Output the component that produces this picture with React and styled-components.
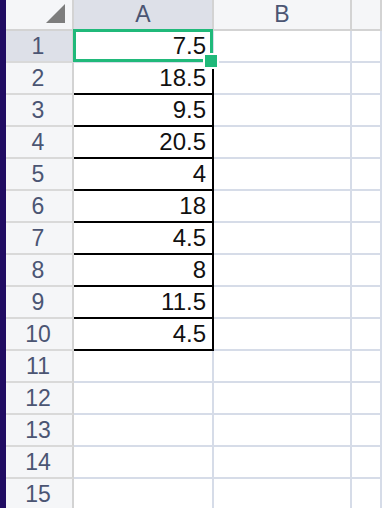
import styled, { createGlobalStyle } from "styled-components";

const GlobalStyle = createGlobalStyle`
  html, body {
    margin: 0;
    padding: 0;
    background: #ffffff;
    overflow: hidden;
  }
  body {
    font-family: "Liberation Sans", Arial, Helvetica, sans-serif;
  }
`;

const Page = styled.div`
  display: flex;
  width: 382px;
  height: 508px;
  overflow: hidden;
`;

const Strip = styled.div`
  width: 6px;
  flex: none;
  background: #200c62;
`;

const Sheet = styled.div`
  flex: 1;
  display: grid;
  grid-template-columns: 68px 140px 138px 1fr;
  grid-template-rows: 31px;
  grid-auto-rows: 32px;
`;

const Corner = styled.div`
  position: relative;
  background: #f5f6f8;
  border-right: 2px solid #d3d3d3;
  border-bottom: 2px solid #d3d3d3;
`;

const Triangle = styled.div`
  position: absolute;
  left: 40px;
  top: 4px;
  width: 0;
  height: 0;
  border-style: solid;
  border-width: 0 0 19px 19px;
  border-color: transparent transparent #7d7d7d transparent;
`;

const ColHeader = styled.div`
  display: flex;
  align-items: center;
  justify-content: center;
  background: ${({ active }) => (active ? "#dde0e8" : "#f5f6f8")};
  border-right: 2px solid #d3d3d3;
  border-bottom: 2px solid #d3d3d3;
  color: #4b5573;
  font-size: 23px;
`;

const RowHeader = styled.div`
  display: flex;
  align-items: center;
  justify-content: center;
  background: ${({ active }) => (active ? "#dde0e8" : "#f5f6f8")};
  border-right: 2px solid #d3d3d3;
  border-bottom: 2px solid #d9d9d9;
  color: #4b5573;
  font-size: 23px;
  padding-right: 2px;
`;

const Cell = styled.div`
  position: relative;
  display: flex;
  align-items: center;
  justify-content: flex-end;
  padding-right: 6px;
  border-right: 2px solid ${({ boxed }) => (boxed ? "#000" : "#d6dce8")};
  border-bottom: 2px solid ${({ boxed }) => (boxed ? "#000" : "#d6dce8")};
  color: #111;
  font-size: 24px;
`;

const Selection = styled.div`
  position: absolute;
  left: -1px;
  top: -2px;
  right: -1px;
  bottom: -1px;
  border: 3px solid #20b97a;
  pointer-events: none;
`;

const Handle = styled.div`
  position: absolute;
  right: -9px;
  bottom: -10px;
  width: 12px;
  height: 12px;
  background: #20b97a;
  border: 2px solid #ffffff;
  z-index: 2;
`;

const values = [7.5, 18.5, 9.5, 20.5, 4, 18, 4.5, 8, 11.5, 4.5];
const rows = Array.from({ length: 15 }, (_, i) => i + 1);

export default function App() {
  return (
    <>
      <GlobalStyle />
      <Page>
        <Strip />
        <Sheet>
          <Corner>
            <Triangle />
          </Corner>
          <ColHeader active>A</ColHeader>
          <ColHeader>B</ColHeader>
          <ColHeader />
          {rows.map((r) => {
            const v = values[r - 1];
            return [
              <RowHeader key={`h${r}`} active={r === 1}>
                {r}
              </RowHeader>,
              <Cell key={`a${r}`} boxed={r > 1 && r <= 10}>
                {v !== undefined ? v : ""}
                {r === 1 && (
                  <Selection>
                    <Handle />
                  </Selection>
                )}
              </Cell>,
              <Cell key={`b${r}`} />,
              <Cell key={`c${r}`} />,
            ];
          })}
        </Sheet>
      </Page>
    </>
  );
}
